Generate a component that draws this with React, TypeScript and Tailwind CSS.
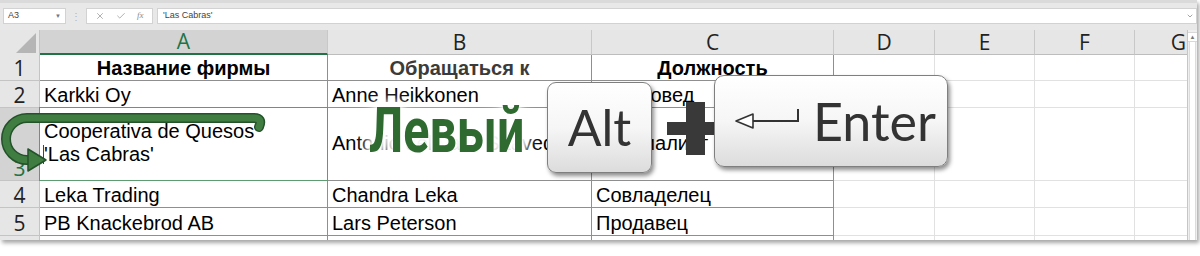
import { X, Check, ChevronDown } from "lucide-react";

const cols = ["w-[288px]", "w-[264px]", "w-[242px]", "w-[101px]", "w-[100px]", "w-[100px]", "w-[52px]"];
const letters = ["A", "B", "C", "D", "E", "F", "G"];

type Row = {
  n: string;
  h: string;
  cells: string[];
  bold?: boolean;
};

const rows: Row[] = [
  { n: "1", h: "h-[26px]", cells: ["Название фирмы", "Обращаться к", "Должность"], bold: true },
  { n: "2", h: "h-[27px]", cells: ["Karkki Oy", "Anne Heikkonen", "Товаровед"] },
  { n: "4", h: "h-[27px]", cells: ["Leka Trading", "Chandra Leka", "Совладелец"] },
  { n: "5", h: "h-[28px]", cells: ["PB Knackebrod AB", "Lars Peterson", "Продавец"] },
];

function Cells({ row }: { row: Row }) {
  return (
    <>
      {cols.map((w, i) => {
        const txt = row.cells[i];
        const inTable = i < 3;
        return (
          <div
            key={i}
            className={`${w} shrink-0 flex items-end overflow-hidden whitespace-nowrap border-b ${
              inTable ? "border-r border-[#8f8f8f]" : "border-r border-[#e1e1e1] border-b-[#e1e1e1]"
            } ${i === 6 ? "border-r-0" : ""} ${row.bold ? "justify-center font-bold" : "pl-[4px]"} ${
              i === 1 && row.bold ? "text-[#3b3b3b]" : "text-black"
            }`}
          >
            {txt && <span className="leading-[23px]">{txt}</span>}
          </div>
        );
      })}
    </>
  );
}

function RowHead({ n, active }: { n: string; active?: boolean }) {
  return (
    <div
      className={`w-[40px] shrink-0 flex items-end justify-center border-r border-b border-[#c4c4c4] font-['Open_Sans',sans-serif] text-[21px] leading-[24px] ${
        active ? "bg-[#d3d3d3] text-[#217346]" : "bg-[#e6e6e6] text-[#222]"
      }`}
    >
      {n}
    </div>
  );
}

export default function App() {
  return (
    <div className="relative w-[1200px] h-[256px] bg-white overflow-hidden font-['Liberation_Sans',Arial,sans-serif] text-[20px]">
      <div className="w-[1197px] h-[240px] flex flex-col bg-white shadow-[2px_3px_4px_rgba(0,0,0,0.35)] overflow-hidden">
        {/* formula bar */}
        <div className="h-[30px] shrink-0 bg-[#e8e8e8] border-t-[3px] border-[#dadada] flex items-start pt-[5px] text-[9px] text-[#444]">
          <div className="ml-[3px] w-[63px] h-[16px] bg-white border border-[#d2d2d2] flex items-center justify-between px-[4px]">
            <span>A3</span>
            <span className="text-[6px] text-[#777]">▼</span>
          </div>
          <div className="w-[20px] h-[16px] flex items-center justify-center text-[#b3b3b3] text-[10px]">⋮</div>
          <div className="w-[67px] h-[16px] bg-white border border-[#d2d2d2] flex items-center justify-around px-[3px] text-[#8a8a8a]">
            <X size={10} strokeWidth={1.6} />
            <Check size={10} strokeWidth={1.6} />
            <span className="font-['Liberation_Serif',serif] italic text-[9px]">fx</span>
          </div>
          <div className="ml-[4px] flex-1 h-[16px] bg-white border border-[#d2d2d2] flex items-center justify-between pl-[5px] pr-[2px]">
            <span>'Las Cabras'</span>
            <ChevronDown size={8} className="text-[#777]" />
          </div>
        </div>

        <div className="flex flex-1 min-h-0">
          <div className="flex flex-col w-[1187px]">
            {/* column headers */}
            <div className="h-[25px] shrink-0 flex bg-[#e6e6e6] font-['Open_Sans',sans-serif] text-[21px] text-[#222]">
              <div className="w-[40px] shrink-0 border-r border-[#c4c4c4] flex items-end justify-end pr-[3px] pb-[2px]">
                <svg width="20" height="20" viewBox="0 0 20 20">
                  <polygon points="20,0 20,20 0,20" fill="#b5b5b5" />
                </svg>
              </div>
              {cols.map((w, i) => (
                <div
                  key={i}
                  className={`${w} shrink-0 flex items-center overflow-hidden leading-none ${
                    i === 6 ? "justify-end pr-[1px]" : "justify-center border-r border-[#c8c8c8]"
                  } ${i === 0 ? "bg-[#d3d3d3] text-[#217346] border-b-2 border-b-[#217346]" : "border-b border-b-[#bdbdbd]"}`}
                >
                  {letters[i]}
                </div>
              ))}
            </div>

            {/* row 1,2 */}
            {rows.slice(0, 2).map((r) => (
              <div key={r.n} className={`${r.h} shrink-0 flex`}>
                <RowHead n={r.n} />
                <Cells row={r} />
              </div>
            ))}

            {/* row 3 with wrapped text */}
            <div className="h-[73px] shrink-0 flex">
              <RowHead n="3" active />
              <div className="relative w-[288px] shrink-0 border-r border-b border-[#8f8f8f] pl-[4px] pt-[12px] leading-[23px]">
                <div>Cooperativa de Quesos</div>
                <div className="flex items-center">
                  <span className="w-[1px] h-[19px] bg-[#444] -ml-[1px]" />
                  <span>'Las Cabras'</span>
                </div>
                <div className="absolute -left-px -top-px -right-px -bottom-px border-[1.5px] border-[#5d9c70]" />
              </div>
              <div className="w-[264px] shrink-0 border-r border-b border-[#8f8f8f] pl-[4px] pt-[24px] whitespace-nowrap overflow-hidden leading-[23px]">
                Antonio del Valle Saavedra
              </div>
              <div className="w-[242px] shrink-0 border-r border-b border-[#8f8f8f] pl-[4px] pt-[24px] whitespace-nowrap overflow-hidden leading-[23px]">
                Специалист
              </div>
              <div className="w-[101px] shrink-0 border-r border-b border-[#e1e1e1]" />
              <div className="w-[100px] shrink-0 border-r border-b border-[#e1e1e1]" />
              <div className="w-[100px] shrink-0 border-r border-b border-[#e1e1e1]" />
              <div className="w-[52px] shrink-0 border-b border-[#e1e1e1]" />
            </div>

            {rows.slice(2).map((r) => (
              <div key={r.n} className={`${r.h} shrink-0 flex`}>
                <RowHead n={r.n} />
                <Cells row={r} />
              </div>
            ))}

            {/* row 6, mostly cut off */}
            <div className="flex-1 flex overflow-hidden">
              <div className="w-[40px] shrink-0 bg-[#e6e6e6] border-r border-[#c4c4c4]" />
              <div className="w-[288px] shrink-0 border-r border-[#8f8f8f] pl-[4px] pt-[2px] leading-[23px] whitespace-nowrap">Lonesome Kulinik Handelsted</div>
              <div className="w-[264px] shrink-0 border-r border-[#8f8f8f] pl-[4px] pt-[2px] leading-[23px] whitespace-nowrap">Renate</div>
              <div className="w-[242px] shrink-0 border-r border-[#8f8f8f]" />
              <div className="w-[101px] shrink-0 border-r border-[#e1e1e1]" />
              <div className="w-[100px] shrink-0 border-r border-[#e1e1e1]" />
              <div className="w-[100px] shrink-0 border-r border-[#e1e1e1]" />
            </div>
          </div>

          {/* scrollbar */}
          <div className="w-[10px] bg-[#efefef] border-l border-[#c6c6c6] flex flex-col">
            <div className="h-[10px] mt-[2px] flex items-center justify-center text-[6px] text-[#777] bg-white border-y border-[#d8d8d8]">▲</div>
            <div className="flex-1 bg-white mx-[1px] border-x border-[#dcdcdc]" />
          </div>
        </div>
      </div>

      {/* curved arrow showing line break */}
      <svg className="absolute left-0 top-0 pointer-events-none" width="300" height="200" viewBox="0 0 300 200">
        <path
          d="M259 127 Q263 118 254 118 L27 118 A21 21 0 0 0 27 160 L32 160"
          fill="none"
          stroke="#24522a"
          strokeWidth="10"
          strokeLinecap="round"
        />
        <path
          d="M259 127 Q263 118 254 118 L27 118 A21 21 0 0 0 27 160 L32 160"
          fill="none"
          stroke="#3f7d41"
          strokeWidth="7"
          strokeLinecap="round"
        />
        <polygon points="46,160 28,149 28,171" fill="#3f7d41" stroke="#24522a" strokeWidth="1.5" strokeLinejoin="round" />
      </svg>

      <div className="absolute left-[369px] top-[99px] origin-left scale-x-[0.77] font-['Roboto',sans-serif] font-bold text-[63px] leading-none text-[#2f6a31] [text-shadow:0_0_4px_#fff,0_0_8px_#fff,0_0_10px_#fff,0_0_14px_#fff,0_0_18px_#fff,0_0_24px_#fff]">
        Левый
      </div>

      <div className="absolute left-[547px] top-[82px] w-[105px] h-[91px] rounded-[9px] border border-[#7f7f7f] bg-gradient-to-b from-white via-[#f6f6f6] to-[#dcdcdc] shadow-[2px_3px_4px_rgba(0,0,0,0.45)] flex items-center justify-center font-['Lato',sans-serif] text-[50px] text-[#333]">
        Alt
      </div>

      <div className="absolute left-[667px] top-[122px] w-[50px] h-[13px] bg-[#393939]" />
      <div className="absolute left-[686px] top-[102px] w-[19px] h-[53px] bg-[#393939]" />

      <div className="absolute left-[714px] top-[75px] w-[234px] h-[92px] rounded-[10px] border border-[#7f7f7f] bg-gradient-to-b from-white via-[#f6f6f6] to-[#dcdcdc] shadow-[2px_3px_4px_rgba(0,0,0,0.45)] flex items-center pl-[20px] gap-[12px] font-['Lato',sans-serif] text-[52px] text-[#333]">
        <svg width="66" height="26" viewBox="0 0 66 26" className="shrink-0">
          <polygon points="1,13 18,6 18,20" fill="#fff" stroke="#333" strokeWidth="1.6" strokeLinejoin="round" />
          <path d="M18 13 L63 13 L63 1" fill="none" stroke="#333" strokeWidth="2" />
        </svg>
        <span className="leading-none">Enter</span>
      </div>
    </div>
  );
}
